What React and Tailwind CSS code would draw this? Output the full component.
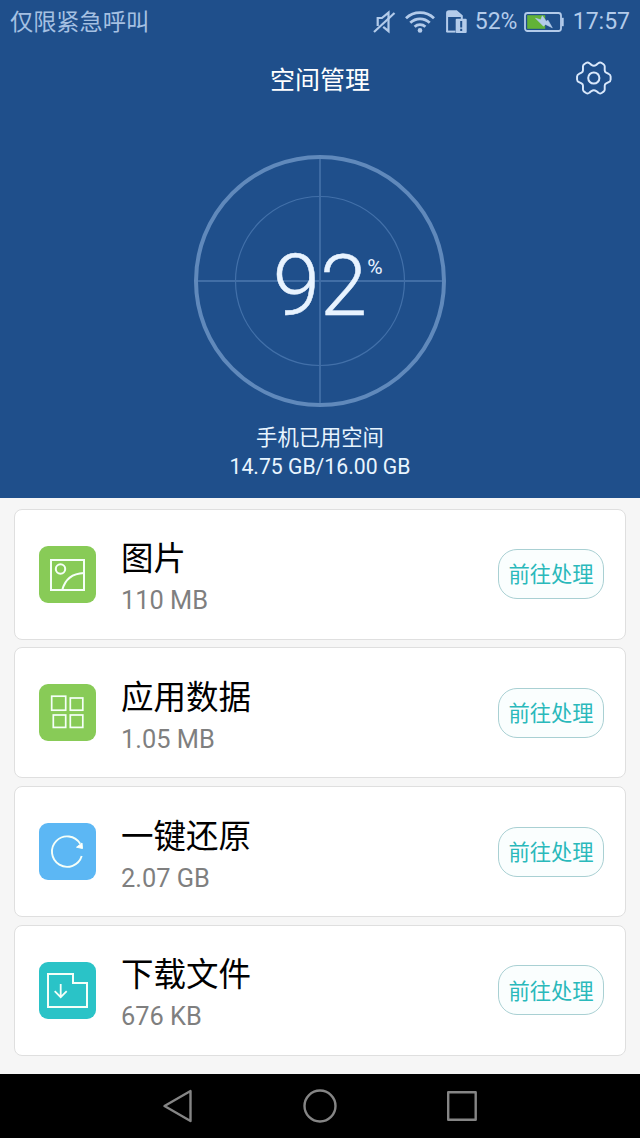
import React from 'react';

const FONT = "font-[Roboto,'Noto_Sans_CJK_SC',sans-serif]";

function StatusBar() {
  return (
    <div className="flex items-center h-11 pl-[10px] pr-[11px] text-[#b3cbea]">
      <span className="text-[23.2px] leading-[44px] font-normal text-[#a5c0e2]">仅限紧急呼叫</span>
      <div className="flex items-center ml-auto">
        {/* Muted speaker */}
        <svg className="mr-[9px]" width="23" height="24" viewBox="0 0 23 24" fill="none" stroke="currentColor" strokeWidth="2.2">
          <path d="M4.7 16V8h4.2l6.6-5.4v18.6l-5.3-4.4" />
          <path d="M1 22L21.5 3" />
        </svg>
        {/* Wi-Fi */}
        <svg className="mr-[11px]" width="30" height="24" viewBox="0 0 30 24" fill="none" stroke="currentColor" strokeWidth="2.8">
          <path d="M1 8.2a20.3 20.3 0 0 1 28 0" />
          <path d="M5.3 12.7a14 14 0 0 1 19.4 0" />
          <path d="M9.6 16.8a8 8 0 0 1 10.8 0" />
          <circle cx="15" cy="20.4" r="2.3" fill="currentColor" stroke="none" />
        </svg>
        {/* SIM card alert */}
        <svg className="mr-2" width="21" height="24" viewBox="0 0 21 24" fill="none">
          <path d="M1.1 22V3Q1.1 1.2 3 1.2h7.4L15.8 6v4" stroke="currentColor" strokeWidth="2" />
          <path d="M1 2h9.6l5.2 5H1z" fill="currentColor" />
          <path d="M0.5 21.6h9" stroke="currentColor" strokeWidth="2" />
          <rect x="9.7" y="8.8" width="11" height="14.2" rx="1" fill="currentColor" />
          <path d="M15.2 11v6.5M15.2 18.8v2.2" stroke="#1f4f8b" strokeWidth="2" />
        </svg>
        <span className="text-[23px] leading-[44px] w-[42px] mr-[7px] whitespace-nowrap">52%</span>
        {/* Battery */}
        <svg className="mr-[9px]" width="40" height="22" viewBox="0 0 40 22" fill="none">
          <rect x="1" y="2" width="36" height="18" rx="2.5" stroke="currentColor" strokeWidth="1.8" />
          <path d="M38.6 6.8v8.4" stroke="currentColor" strokeWidth="2.2" />
          <rect x="3.2" y="4.2" width="18" height="13.6" fill="#62b237" />
          <path d="M11.5 7.2l5.2 1.6 1.6-4 4 5.4 1.7-1 4.3 7.6-6.8-3.4-2 1.8z" fill="currentColor" stroke="currentColor" strokeWidth="0.6" />
        </svg>
        <span className="text-[23px] leading-[44px] whitespace-nowrap -mr-px">17:57</span>
      </div>
    </div>
  );
}

function TitleBar() {
  return (
    <div className="grid grid-cols-[1fr_auto_1fr] items-center h-[68px]">
      <h1 className="col-start-2 pt-1.5 text-[25px] font-normal text-white">空间管理</h1>
      <button className="justify-self-end mr-7" aria-label="settings">
        <svg width="37" height="35" viewBox="0 0 37 35" fill="none" stroke="#d9e8fb" strokeWidth="2" strokeLinejoin="round">
          <path
            transform="translate(.9 0) scale(.97)"
            d="M10.5 2Q12.4 1 14 2.4L16 4Q18.5 5.6 21 4L23 2.4Q24.6 1 26.5 2L28.5 3.4Q30 4.5 29.7 6.5V9Q29.5 11 31.2 11.9L33.8 13.2Q35.7 14 35.8 16V19Q35.7 21 33.8 21.8L31.2 23.1Q29.5 24 29.7 26V28.5Q30 30.5 28.5 31.6L26.5 33Q24.6 34 23 32.6L21 31Q18.5 29.4 16 31L14 32.6Q12.4 34 10.5 33L8.5 31.6Q7 30.5 7.3 28.5V26Q7.5 24 5.8 23.1L3.2 21.8Q1.3 21 1.2 19V16Q1.3 14 3.2 13.2L5.8 11.9Q7.5 11 7.3 9V6.5Q7 4.5 8.5 3.4Z"
          />
          <circle cx="18.8" cy="17" r="5.6" />
        </svg>
      </button>
    </div>
  );
}

function Gauge({ percent }) {
  return (
    <div className="relative w-[252px] h-[252px] mx-auto mt-[43px] flex items-center justify-center">
      <svg className="absolute inset-0" width="252" height="252" viewBox="0 0 252 252" fill="none">
        <circle cx="126" cy="126" r="124" stroke="#6089bb" strokeWidth="4" />
        <circle cx="126" cy="126" r="84.5" stroke="#4270a9" strokeWidth="1.2" />
        <path d="M126 4v244M4 126h244" stroke="#416ea6" strokeWidth="1.8" />
      </svg>
      <div className="relative mt-[10px] text-[#e8f3ff]">
        <span className="block text-[85px] leading-none font-light [-webkit-text-stroke:0.5px_#e8f3ff]">{percent}</span>
        <span className="absolute left-full top-[13px] text-[21px] leading-none">%</span>
      </div>
    </div>
  );
}

const ImageIcon = () => (
  <g strokeWidth="2">
    <rect x="12" y="14" width="33" height="30" />
    <circle cx="21.5" cy="23" r="4.7" />
    <path d="M23.3 44c2.5-10 10-16.5 21.7-17" />
  </g>
);

const AppsIcon = () => (
  <g strokeWidth="1.7">
    <rect x="12.7" y="12.2" width="14" height="14" />
    <rect x="31.3" y="14" width="12.5" height="12.2" />
    <rect x="14.3" y="31" width="12.4" height="12.4" />
    <rect x="31.3" y="31" width="12.5" height="12.4" />
  </g>
);

const RestoreIcon = () => (
  <g strokeWidth="1.9">
    <path d="M42.7 33A15.2 15.2 0 1 1 41.2 20.8" />
    <path d="M37.5 24.2l6 1.3-.5-5.5z" fill="#fff" strokeWidth="1" />
  </g>
);

const DownloadIcon = () => (
  <g strokeWidth="2">
    <path d="M9 12h25v9h14v24H9z" />
    <path d="M21.7 22v13M15.7 29.2l6 6 6-6" strokeWidth="1.8" />
  </g>
);

const ITEMS = [
  { title: '图片', size: '110 MB', color: 'bg-[#88cb57]', Icon: ImageIcon },
  { title: '应用数据', size: '1.05 MB', color: 'bg-[#88cb57]', Icon: AppsIcon },
  { title: '一键还原', size: '2.07 GB', color: 'bg-[#5cb7f4]', Icon: RestoreIcon },
  { title: '下载文件', size: '676 KB', color: 'bg-[#2ac3c7]', Icon: DownloadIcon },
];

function StorageCard({ title, size, color, Icon }) {
  return (
    <div className="flex items-center h-[131px] pl-6 pr-[21px] bg-white border border-[#dfdfdf] rounded-lg">
      <div className={`w-[57px] h-[57px] rounded-[9px] shrink-0 ${color}`}>
        <svg width="57" height="57" viewBox="0 0 57 57" fill="none" stroke="#f5fff8">
          <Icon />
        </svg>
      </div>
      <div className="ml-[25px] pt-[10px]">
        <div className="text-[32.5px] leading-[42px] text-black">{title}</div>
        <div className="text-[25.4px] leading-[40px] text-[#7f7f7f]">{size}</div>
      </div>
      <button className="ml-auto w-[106px] h-[50px] pt-0.5 rounded-[19px] border border-[#a9d0d3] bg-[#fafefe] text-[21.3px] leading-none whitespace-nowrap text-[#2ab9bb]">
        前往处理
      </button>
    </div>
  );
}

function NavBar() {
  return (
    <div className="flex items-center justify-between h-16 px-[162px] bg-black">
      <svg width="32" height="36" viewBox="0 0 32 36" fill="none" stroke="#858585" strokeWidth="2.4" strokeLinejoin="round">
        <path d="M2.5 18L28.5 3v30z" />
      </svg>
      <svg width="36" height="36" viewBox="0 0 36 36" fill="none" stroke="#858585" strokeWidth="2.4">
        <circle cx="18" cy="18" r="15.5" />
      </svg>
      <svg width="32" height="36" viewBox="0 0 32 36" fill="none" stroke="#858585" strokeWidth="2.4" strokeLinejoin="round">
        <rect x="2.2" y="4.2" width="27.5" height="27.5" />
      </svg>
    </div>
  );
}

export default function App() {
  return (
    <div className={`flex flex-col w-[640px] h-[1138px] overflow-hidden bg-[#f6f6f6] ${FONT}`}>
      {/* Header */}
      <div className="h-[498px] shrink-0 bg-[#1f4f8b]">
        <StatusBar />
        <TitleBar />
        <Gauge percent={92} />
        <div className="mt-4 text-center text-[#e8f5ff]">
          <div className="text-[21.3px] leading-[30px]">手机已用空间</div>
          <div className="text-[21.2px] leading-[28px]">14.75 GB/16.00 GB</div>
        </div>
      </div>

      {/* Storage list */}
      <div className="flex-1 flex flex-col gap-[7.75px] px-[14px] pt-[10.5px]">
        {ITEMS.map((item) => (
          <StorageCard key={item.title} {...item} />
        ))}
      </div>

      <NavBar />
    </div>
  );
}
